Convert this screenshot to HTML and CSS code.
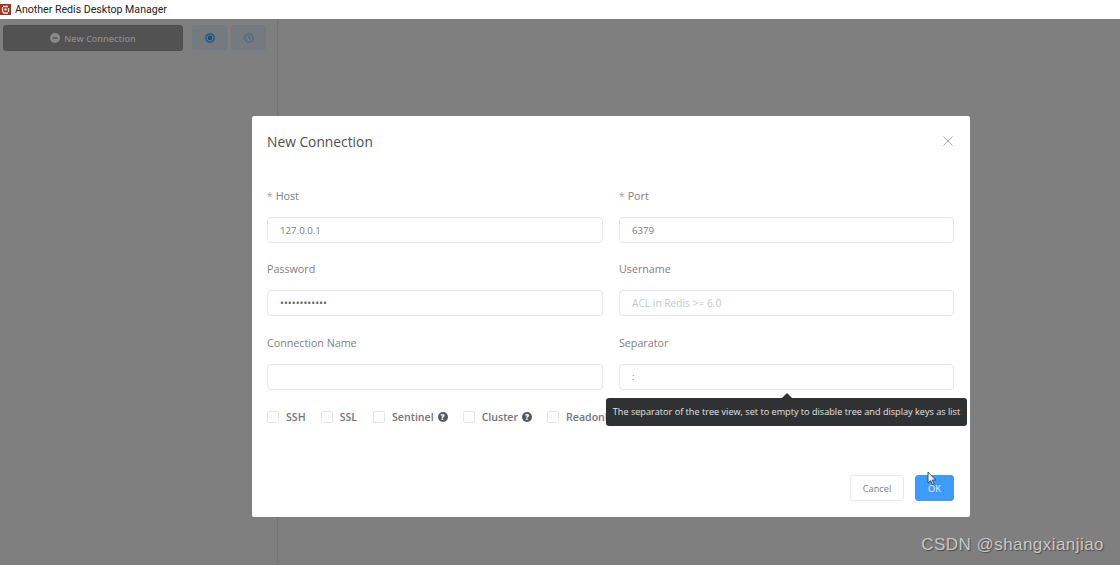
FILE: index.html
```html
<!DOCTYPE html>
<html lang="en">
<head>
  <meta charset="UTF-8" />
  <title>Another Redis Desktop Manager</title>
  <link rel="stylesheet" href="styles.css">
</head>
<body>

  <!-- Window title bar -->
  <div class="titlebar">
    <svg class="app-logo" width="11" height="11" viewBox="0 0 11 11">
      <rect width="11" height="11" fill="#a8321f"/>
      <path d="M3 2.5 L8 2.5 M2.5 3 V7.5 L4 9 H8 M8.5 4 V8" stroke="#f3e3d8" stroke-width="1.3" fill="none"/>
      <circle cx="5.5" cy="5.5" r="1.2" fill="#f3e3d8"/>
    </svg>
    <span>Another Redis Desktop Manager</span>
  </div>

  <!-- App behind the dialog -->
  <div class="app">
    <div class="aside">
      <div class="aside-top">
        <button class="new-btn">
          <svg width="10" height="10" viewBox="0 0 10 10">
            <circle cx="5" cy="5" r="5" fill="#8a8a8a"/>
            <path d="M2.5 5 H7.5" stroke="#4f4f4f" stroke-width="1.4"/>
          </svg>
          New Connection
        </button>
        <button class="icon-btn">
          <svg width="10" height="10" viewBox="0 0 10 10">
            <circle cx="5" cy="5" r="4.2" fill="none" stroke="#1d4f86" stroke-width="1.2"/>
            <circle cx="5" cy="5" r="2.4" fill="#1d4f86"/>
          </svg>
        </button>
        <button class="icon-btn">
          <svg width="10" height="10" viewBox="0 0 10 10">
            <circle cx="5" cy="5" r="4.2" fill="none" stroke="#3f6488" stroke-width="1"/>
            <path d="M5 2.6 V5.4 H7" fill="none" stroke="#3f6488" stroke-width="1"/>
          </svg>
        </button>
      </div>
    </div>
    <div class="main"></div>
  </div>

  <!-- New connection dialog -->
  <div class="dialog">
    <div class="dialog-header">
      <h2>New Connection</h2>
      <svg class="close" width="10" height="10" viewBox="0 0 10 10">
        <path d="M0.5 0.5 L9.5 9.5 M9.5 0.5 L0.5 9.5" stroke="#a6a9ad" stroke-width="1"/>
      </svg>
    </div>

    <form class="form-grid">
      <div class="field">
        <label><span class="req">*</span> Host</label>
        <input type="text" value="127.0.0.1" />
      </div>
      <div class="field">
        <label><span class="req">*</span> Port</label>
        <input type="text" value="6379" />
      </div>
      <div class="field">
        <label>Password</label>
        <input type="password" value="abcdefghijkl" />
      </div>
      <div class="field">
        <label>Username</label>
        <input type="text" placeholder="ACL in Redis >= 6.0" />
      </div>
      <div class="field">
        <label>Connection Name</label>
        <input type="text" />
      </div>
      <div class="field">
        <label>Separator</label>
        <input type="text" value=":" />
      </div>
    </form>

    <div class="checks">
      <span class="check check-ssh"><i class="box"></i>SSH</span>
      <span class="check check-ssl"><i class="box"></i>SSL</span>
      <span class="check check-sentinel"><i class="box"></i>Sentinel <b class="help">?</b></span>
      <span class="check check-cluster"><i class="box"></i>Cluster <b class="help">?</b></span>
      <span class="check"><i class="box"></i>Readonly</span>
    </div>

    <div class="dialog-footer">
      <button class="btn">Cancel</button>
      <button class="btn btn-primary">OK</button>
    </div>

    <div class="tooltip">The separator of the tree view, set to empty to disable tree and display keys as list</div>
  </div>

  <!-- Mouse pointer -->
  <svg class="cursor" width="10" height="15" viewBox="0 0 10 15">
    <path d="M1 1 V12 L3.6 9.6 L5.4 13.6 L7 12.8 L5.2 9 H8.8 Z" fill="#e8eef5" stroke="#333" stroke-width="0.8"/>
  </svg>

  <div class="watermark">CSDN @shangxianjiao</div>
</body>
</html>
```

FILE: styles.css
```css
* {
  margin: 0;
  padding: 0;
  box-sizing: border-box;
}

html, body {
  height: 100%;
  overflow: hidden;
}

body {
  font-family: "Open Sans", "Noto Sans", Arial, sans-serif;
  background: #7f7f7f;
  display: flex;
  flex-direction: column;
}

.titlebar {
  height: 19px;
  background: #fff;
  display: flex;
  align-items: center;
  gap: 4px;
  font-family: Roboto, Arial, sans-serif;
  font-size: 10.6px;
  color: #222;
}

.app-logo {
  flex: none;
}

.app {
  flex: 1;
  display: flex;
}

.aside {
  width: 278px;
  border-right: 1px solid #747474;
  padding: 6px 0 0 3px;
}

.aside-top {
  display: flex;
  gap: 9px;
}

.new-btn {
  width: 180px;
  height: 26px;
  background: #525252;
  border: 1px solid #4d4d4d;
  border-radius: 3px;
  color: #8a8a8a;
  font: 600 9px "Open Sans", Arial, sans-serif;
  display: flex;
  align-items: center;
  justify-content: center;
  gap: 4px;
}

.icon-btn {
  width: 35px;
  height: 25px;
  background: #747a80;
  border: 1px solid #6f7a85;
  border-radius: 3px;
  display: flex;
  align-items: center;
  justify-content: center;
}

.icon-btn + .icon-btn {
  margin-left: -5px;
}

.dialog {
  position: absolute;
  left: 252px;
  top: 116px;
  width: 718px;
  height: 401px;
  background: #fff;
  border-radius: 2px;
  padding: 0 16px 16px 15px;
  display: flex;
  flex-direction: column;
}

.dialog-header {
  height: 51px;
  display: flex;
  align-items: center;
  justify-content: space-between;
  padding-right: 1px;
  margin-bottom: 16px;
}

.dialog-header h2 {
  font-size: 13.8px;
  font-weight: 400;
  color: #4d4f53;
}

.close {
  margin-top: -2px;
}

.form-grid {
  display: grid;
  grid-template-columns: 336px 335px;
  column-gap: 16px;
  row-gap: 13.4px;
}

.field label {
  display: block;
  height: 34px;
  padding-top: 4px;
  line-height: 18px;
  font-size: 10.7px;
  color: #7d8086;
}

.req {
  color: #e58a8a;
}

.field input {
  display: block;
  width: 100%;
  height: 26px;
  border: 1px solid #e4e6ea;
  border-radius: 4px;
  padding: 0 12px;
  font: 9.7px "Open Sans", Arial, sans-serif;
  color: #7a7d82;
  background: #fff;
}

.field input[type="password"] {
  font-size: 10.4px;
  color: #5f6266;
}

.field input::placeholder {
  color: #c4c7cc;
  font-size: 10.2px;
}

.checks {
  display: flex;
  align-items: center;
  margin-top: 18px;
  height: 18px;
  font-size: 10.6px;
  font-weight: 600;
  color: #73767b;
}

.check {
  display: flex;
  align-items: center;
  white-space: nowrap;
}

.check-ssh { margin-right: 15px; }
.check-ssl { margin-right: 16px; }
.check-sentinel { margin-right: 15px; }
.check-cluster { margin-right: 15px; }

.box {
  flex: none;
  width: 12px;
  height: 12px;
  border: 1px solid #e4e6ea;
  border-radius: 2px;
  margin-right: 7px;
}

.help {
  width: 10px;
  height: 10px;
  margin-left: 4px;
  border-radius: 50%;
  background: #55585c;
  color: #fff;
  font-size: 8px;
  line-height: 10px;
  text-align: center;
}

.dialog-footer {
  margin-top: auto;
  display: flex;
  justify-content: flex-end;
  gap: 11px;
}

.btn {
  height: 26px;
  width: 54px;
  border: 1px solid #e8e9ec;
  border-radius: 3px;
  background: #fff;
  color: #7d8086;
  font: 500 9.2px "Open Sans", Arial, sans-serif;
}

.btn-primary {
  width: 39px;
  background: #3d9bfb;
  border-color: #3d9bfb;
  color: #e8f3ff;
}

.tooltip {
  position: absolute;
  left: 354px;
  top: 282px;
  width: 361px;
  height: 28px;
  background: #303133;
  border-radius: 3px;
  color: #e4e4e4;
  font-size: 9.15px;
  line-height: 28px;
  text-align: center;
  white-space: nowrap;
}

.tooltip::before {
  content: "";
  position: absolute;
  left: 176px;
  top: -5px;
  border-left: 5px solid transparent;
  border-right: 5px solid transparent;
  border-bottom: 5px solid #303133;
}

.cursor {
  position: absolute;
  left: 927px;
  top: 471px;
}

.watermark {
  position: absolute;
  right: 16px;
  top: 535px;
  font: 17px "Liberation Sans", Arial, sans-serif;
  letter-spacing: 0.45px;
  color: #c8c8c8;
  text-shadow: 1px 1px 1px #4a4a4a;
}
```
